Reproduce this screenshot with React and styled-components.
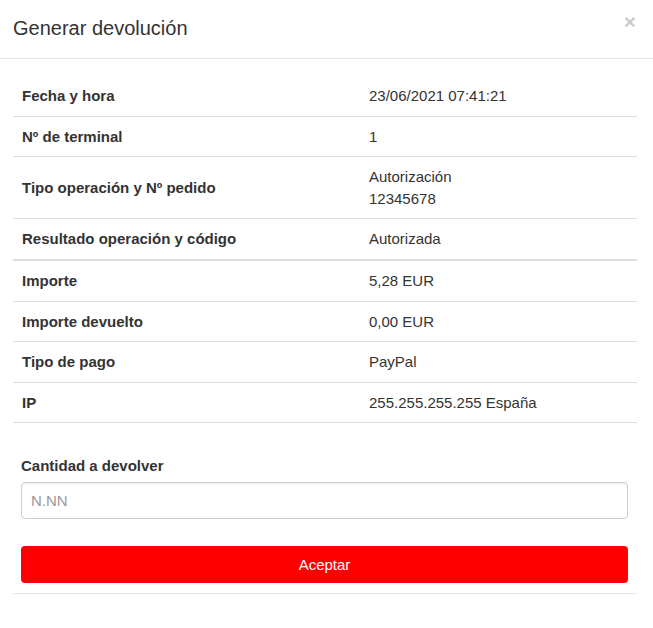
import React from 'react';
import styled, { createGlobalStyle } from 'styled-components';

const GlobalStyle = createGlobalStyle`
  html, body {
    margin: 0;
    padding: 0;
    background: #fff;
  }
  body {
    font-family: "Liberation Sans", Arial, sans-serif;
    color: #333;
  }
`;

const rows = [
  { label: 'Fecha y hora', value: ['23/06/2021 07:41:21'] },
  { label: 'Nº de terminal', value: ['1'] },
  { label: 'Tipo operación y Nº pedido', value: ['Autorización', '12345678'] },
  { label: 'Resultado operación y código', value: ['Autorizada'], thick: true },
  { label: 'Importe', value: ['5,28 EUR'] },
  { label: 'Importe devuelto', value: ['0,00 EUR'] },
  { label: 'Tipo de pago', value: ['PayPal'] },
  { label: 'IP', value: ['255.255.255.255 España'] },
];

const App = () => {
  return (
    <>
      <GlobalStyle />
      <Modal>
        <Header>
          <Title>Generar devolución</Title>
          <CloseButton type="button" aria-label="Cerrar">×</CloseButton>
        </Header>
        <Body>
          <Table>
            {rows.map((row) => (
              <Row key={row.label} thick={row.thick}>
                <LabelCell>{row.label}</LabelCell>
                <ValueCell>
                  {row.value.map((line) => (
                    <div key={line}>{line}</div>
                  ))}
                </ValueCell>
              </Row>
            ))}
          </Table>
          <Form>
            <FieldLabel htmlFor="cantidad">Cantidad a devolver</FieldLabel>
            <Input id="cantidad" type="text" placeholder="N.NN" />
            <SubmitButton type="button">Aceptar</SubmitButton>
          </Form>
          <Divider />
        </Body>
      </Modal>
    </>
  );
};

const Modal = styled.div`
  width: 653px;
  min-height: 628px;
  background: #fff;
`;

const Header = styled.div`
  display: flex;
  align-items: flex-start;
  justify-content: space-between;
  padding: 14px 17px 15px 13px;
  border-bottom: 1px solid #e5e5e5;
`;

const Title = styled.h4`
  margin: 0;
  font-size: 20px;
  font-weight: normal;
  line-height: 1.45;
  color: #333;
`;

const CloseButton = styled.button`
  margin-top: -3px;
  padding: 0;
  border: 0;
  background: transparent;
  font-family: "Liberation Sans", Arial, sans-serif;
  font-size: 21px;
  font-weight: bold;
  line-height: 1;
  color: #000;
  opacity: 0.2;
  cursor: pointer;
`;

const Body = styled.div`
  padding: 17px 16px 0 13px;
`;

const Table = styled.div`
  display: flex;
  flex-direction: column;
`;

const Row = styled.div`
  display: grid;
  grid-template-columns: 347px 1fr;
  border-bottom: ${(p) => (p.thick ? '2px' : '1px')} solid #ddd;
  font-size: 15px;
  line-height: 21.6px;
`;

const LabelCell = styled.div`
  padding: 9px;
  font-weight: bold;
  display: flex;
  align-items: center;
`;

const ValueCell = styled.div`
  padding: 9px;
`;

const Form = styled.div`
  display: flex;
  flex-direction: column;
  padding: 32px 9px 0 8px;
`;

const FieldLabel = styled.label`
  font-size: 15px;
  font-weight: bold;
  line-height: 21px;
  margin-bottom: 6px;
`;

const Input = styled.input`
  box-sizing: border-box;
  height: 37px;
  padding: 6px 9px;
  border: 1px solid #ccc;
  border-radius: 4px;
  font-family: "Liberation Sans", Arial, sans-serif;
  font-size: 15px;
  color: #555;
  box-shadow: inset 0 1px 1px rgba(0, 0, 0, 0.075);

  &::placeholder {
    color: #999;
  }
`;

const SubmitButton = styled.button`
  margin-top: 27px;
  height: 37px;
  border: 0;
  border-radius: 4px;
  background: #ff0000;
  color: #fff;
  font-family: "Liberation Sans", Arial, sans-serif;
  font-size: 15px;
  cursor: pointer;
`;

const Divider = styled.div`
  margin-top: 10px;
  border-top: 1px solid #e5e5e5;
`;

export default App;
